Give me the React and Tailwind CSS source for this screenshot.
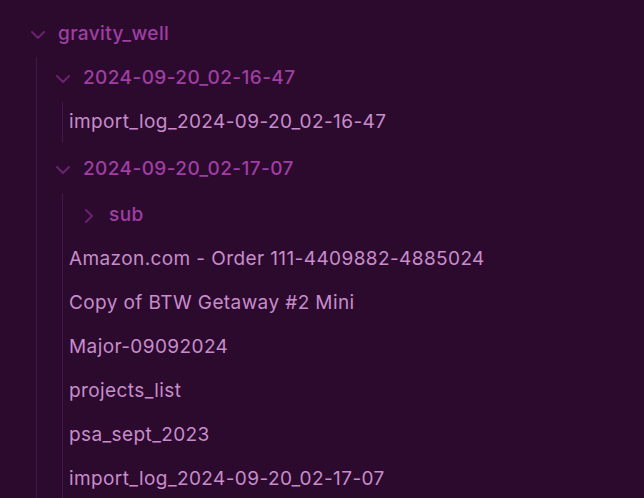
import React from "react";

const Down = () => (
  <svg width="14" height="8" viewBox="0 0 14 8" fill="none" className="block">
    <path d="M1 1 L7 7 L13 1" stroke="#6a2270" strokeWidth="2" strokeLinecap="round" strokeLinejoin="round" />
  </svg>
);
const Right = () => (
  <svg width="8" height="14" viewBox="0 0 8 14" fill="none" className="block">
    <path d="M1 1 L7 7 L1 13" stroke="#6a2270" strokeWidth="2" strokeLinecap="round" strokeLinejoin="round" />
  </svg>
);

const FolderTitle = ({ name, open }) => (
  <div className="flex h-[41px] items-center pl-[16px]">
    <div className="flex w-[20px] items-center justify-center">{open ? <Down /> : <Right />}</div>
    <span className="ml-[10px] font-medium text-[#a03ea3]">{name}</span>
  </div>
);

const File = ({ name }) => (
  <div className="flex h-[41px] items-center pl-[6px] text-[#c88ccb]">{name}</div>
);

export default function App() {
  return (
    <div
      className="h-[498px] w-[644px] overflow-hidden bg-[#2b0a2e] pl-[12px] pt-[14px] text-[19px] tracking-[0.4px]"
      style={{ fontFamily: "Inter, 'Noto Sans', sans-serif" }}
    >
      <FolderTitle name="gravity_well" open />
      <div className="ml-[24px] mt-[2px] flex flex-col gap-[3px] border-l border-[#461549] pt-[1px]">
        <FolderTitle name="2024-09-20_02-16-47" open />
        <div className="mb-[3px] ml-[25px] flex flex-col gap-[3px] border-l border-[#461549]">
          <File name="import_log_2024-09-20_02-16-47" />
        </div>
        <FolderTitle name="2024-09-20_02-17-07" open />
        <div className="ml-[25px] flex flex-col gap-[3px] border-l border-[#461549] pt-[2px]">
          <FolderTitle name="sub" open={false} />
          <File name="Amazon.com - Order 111-4409882-4885024" />
          <File name="Copy of BTW Getaway #2 Mini" />
          <File name="Major-09092024" />
          <File name="projects_list" />
          <File name="psa_sept_2023" />
          <File name="import_log_2024-09-20_02-17-07" />
        </div>
      </div>
    </div>
  );
}
